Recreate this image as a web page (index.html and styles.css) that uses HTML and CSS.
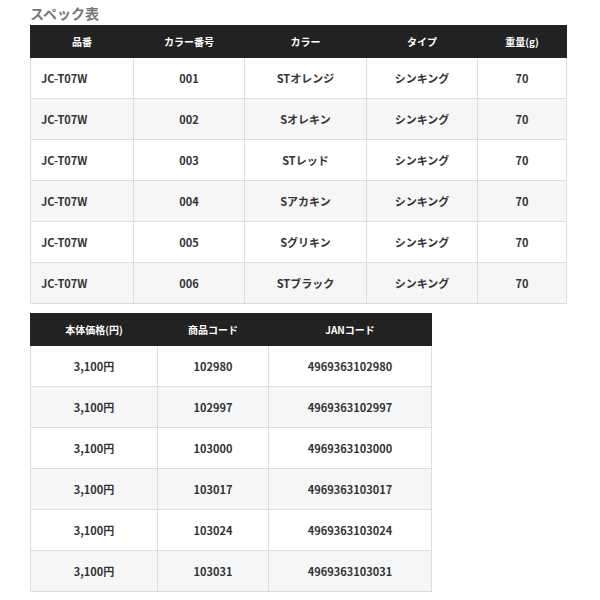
FILE: index.html
```html
<!DOCTYPE html>
<html lang="ja">
<head>
<meta charset="utf-8">
<link rel="stylesheet" href="styles.css">
</head>
<body>
<div class="page">
  <h2 class="title">スペック表</h2>
  <table class="spec spec1">
    <colgroup>
      <col class="c1"><col class="c2"><col class="c3"><col class="c4"><col class="c5">
    </colgroup>
    <thead>
      <tr><th>品番</th><th>カラー番号</th><th>カラー</th><th>タイプ</th><th>重量(g)</th></tr>
    </thead>
    <tbody>
      <tr><td class="left">JC-T07W</td><td>001</td><td>STオレンジ</td><td>シンキング</td><td>70</td></tr>
      <tr><td class="left">JC-T07W</td><td>002</td><td>Sオレキン</td><td>シンキング</td><td>70</td></tr>
      <tr><td class="left">JC-T07W</td><td>003</td><td>STレッド</td><td>シンキング</td><td>70</td></tr>
      <tr><td class="left">JC-T07W</td><td>004</td><td>Sアカキン</td><td>シンキング</td><td>70</td></tr>
      <tr><td class="left">JC-T07W</td><td>005</td><td>Sグリキン</td><td>シンキング</td><td>70</td></tr>
      <tr><td class="left">JC-T07W</td><td>006</td><td>STブラック</td><td>シンキング</td><td>70</td></tr>
    </tbody>
  </table>
  <table class="spec spec2">
    <colgroup>
      <col class="d1"><col class="d2"><col class="d3">
    </colgroup>
    <thead>
      <tr><th>本体価格(円)</th><th>商品コード</th><th>JANコード</th></tr>
    </thead>
    <tbody>
      <tr><td>3,100円</td><td>102980</td><td>4969363102980</td></tr>
      <tr><td>3,100円</td><td>102997</td><td>4969363102997</td></tr>
      <tr><td>3,100円</td><td>103000</td><td>4969363103000</td></tr>
      <tr><td>3,100円</td><td>103017</td><td>4969363103017</td></tr>
      <tr><td>3,100円</td><td>103024</td><td>4969363103024</td></tr>
      <tr><td>3,100円</td><td>103031</td><td>4969363103031</td></tr>
    </tbody>
  </table>
</div>
</body>
</html>
```
FILE: styles.css
```css
html, body {
  margin: 0;
  padding: 0;
  background: #fff;
}
body {
  font-family: "Noto Sans CJK JP", "Noto Sans", sans-serif;
  color: #333;
}
.page {
  padding: 3px 0 0 30px;
}
.title {
  margin: 0 0 2px 0;
  font-size: 14px;
  line-height: 20px;
  font-weight: 700;
  color: #777;
}
.spec {
  border-collapse: collapse;
  table-layout: fixed;
  font-size: 11px;
  font-weight: 700;
}
.spec1 { width: 536px; margin-bottom: 9px; }
.spec2 { width: 401px; }
.c1 { width: 103px; }
.c2 { width: 111px; }
.c3 { width: 122px; }
.c4 { width: 111px; }
.c5 { width: 89px; }
.d1 { width: 127px; }
.d2 { width: 111px; }
.d3 { width: 163px; }
.spec th {
  background: #222;
  color: #fff;
  height: 31px;
  padding: 0;
  font-size: 10px;
  font-weight: 700;
  text-align: center;
  border: 1px solid #222;
}
.spec td {
  height: 40px;
  padding: 0;
  text-align: center;
  border: 1px solid #ddd;
  color: #333;
}
.spec td.left {
  text-align: left;
  padding-left: 10px;
}
.spec tbody tr:nth-child(even) td {
  background: #f6f6f6;
}
```
